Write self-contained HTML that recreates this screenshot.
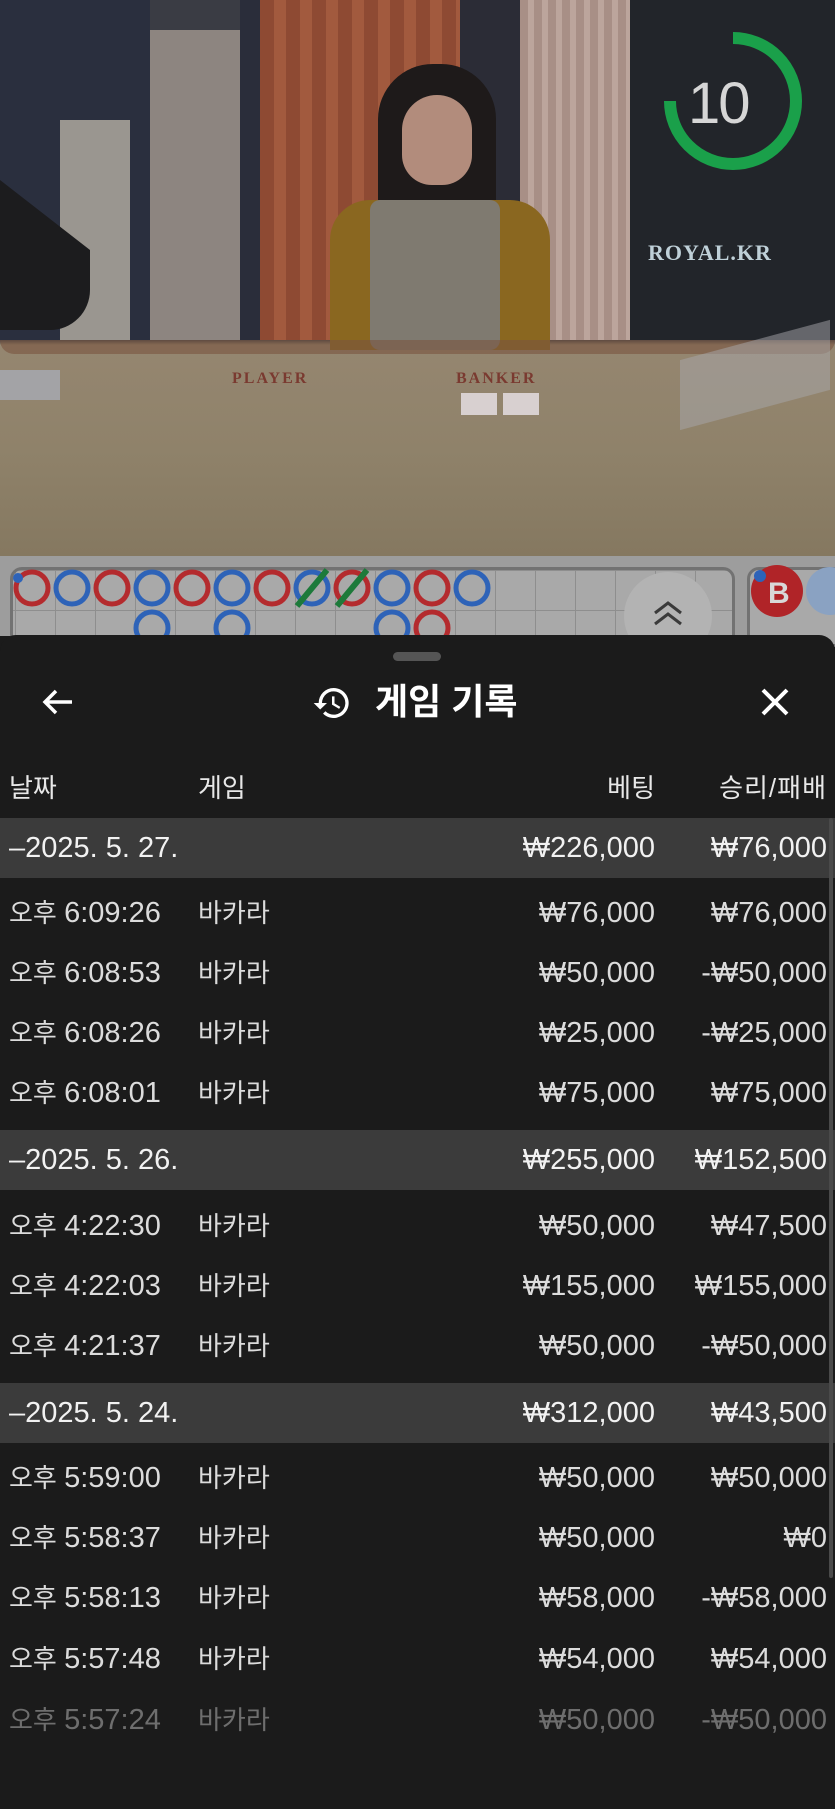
<!DOCTYPE html>
<html><head><meta charset="utf-8"><style>
*{margin:0;padding:0;box-sizing:border-box}
body{width:835px;height:1809px;overflow:hidden;background:#1b1b1b;font-family:"Liberation Sans","Noto Sans CJK KR",sans-serif;position:relative}
.a{position:absolute}
.row{position:absolute;left:0;width:835px;height:60px;font-size:26px;color:#dcdcdc;line-height:60px}
.row span{position:absolute;top:0;white-space:nowrap}
.row i{font-style:normal;font-size:29px}
.n{font-size:29px}
.d{background:#3b3b3b;color:#f2f2f2}
.c1{left:9px}.c2{left:198px}.c3{right:180px}.c4{right:8px}
</style></head><body>
<!-- video -->
<div class="a" style="left:0;top:0;width:835px;height:556px;background:linear-gradient(#3a3c44,#3a3c44 340px,#958670 345px,#8f826a 450px,#857860 556px);overflow:hidden">
 <div class="a" style="left:0;top:0;width:150px;height:340px;background:#2a2f3e"></div>
 <div class="a" style="left:150px;top:30px;width:90px;height:310px;background:#8d8580"></div>
 <div class="a" style="left:60px;top:120px;width:70px;height:220px;background:#9a9690"></div>
 <div class="a" style="left:240px;top:0;width:20px;height:340px;background:#2a2d3a"></div>
 <div class="a" style="left:260px;top:0;width:200px;height:340px;background:repeating-linear-gradient(90deg,#8e4a33 0 14px,#a25a3e 14px 26px)"></div>
 <div class="a" style="left:460px;top:0;width:60px;height:340px;background:#2b2c36"></div>
 <div class="a" style="left:520px;top:0;width:110px;height:340px;background:repeating-linear-gradient(90deg,#a88f86 0 8px,#bca59c 8px 14px)"></div>
 <div class="a" style="left:630px;top:0;width:205px;height:340px;background:#22252a"></div>
 <div class="a" style="left:0;top:0;width:90px;height:330px;background:#1c1c1e;border-radius:0 0 40px 0;clip-path:polygon(0 180px,90px 250px,90px 330px,0 330px)"></div>
 <div class="a" style="left:378px;top:64px;width:118px;height:180px;background:#1e1a1a;border-radius:55px 55px 10px 10px"></div>
 <div class="a" style="left:402px;top:95px;width:70px;height:90px;background:#b28c7c;border-radius:35px 35px 30px 30px"></div>
 <div class="a" style="left:330px;top:200px;width:220px;height:150px;background:#8a6720;border-radius:40px 40px 0 0"></div>
 <div class="a" style="left:370px;top:200px;width:130px;height:150px;background:#7f7a70;border-radius:10px"></div>
 <div class="a" style="left:0;top:340px;width:835px;height:14px;background:#7a5540;border-radius:0 0 30px 30px;opacity:.6"></div>
 <div class="a" style="left:232px;top:370px;font:bold 16px 'Liberation Serif',serif;color:#7a3a30;letter-spacing:2px">PLAYER</div>
 <div class="a" style="left:456px;top:370px;font:bold 16px 'Liberation Serif',serif;color:#7a3a30;letter-spacing:2px">BANKER</div>
 <div class="a" style="left:461px;top:393px;width:36px;height:22px;background:#d8d0d0"></div>
 <div class="a" style="left:503px;top:393px;width:36px;height:22px;background:#d8d0d0"></div>
 <div class="a" style="left:680px;top:340px;width:150px;height:70px;background:#a8a8ac;opacity:.5;transform:skewY(-15deg)"></div>
 <div class="a" style="left:0;top:370px;width:60px;height:30px;background:#a3a3a6"></div>
 <div class="a" style="left:648px;top:240px;font:bold 22px 'Liberation Serif',serif;color:#bfd0d8;letter-spacing:1px">ROYAL.KR</div>
 <svg class="a" style="left:660px;top:28px" width="146" height="146" viewBox="0 0 146 146"><path d="M73 10 A63 63 0 1 1 10 73" fill="none" stroke="#1aa04a" stroke-width="12"/></svg>
 <div class="a" style="left:688px;top:70px;font-size:58px;color:#d6d6d6;letter-spacing:-2px">10</div>
</div>
<!-- roadmap -->
<div class="a" style="left:0;top:556px;width:835px;height:80px;background:#9d9d9d"></div>
<div class="a" style="left:10px;top:567px;width:725px;height:80px;border:3px solid #727272;border-radius:12px;background:#a9a9a9;background-image:linear-gradient(#8e8e8e 1px,transparent 1px),linear-gradient(90deg,#8e8e8e 1px,transparent 1px);background-size:40px 40px;background-position:2px 0"></div>
<div class="a" style="left:747px;top:567px;width:100px;height:80px;border:3px solid #727272;border-radius:12px;background:#a9a9a9"></div>
<svg class="a" style="left:0;top:556px" width="835" height="80">
<g fill="none" stroke-width="5">
<circle cx="32" cy="32" r="16" stroke="#b42b2e"/><circle cx="72" cy="32" r="16" stroke="#2e63b8"/><circle cx="112" cy="32" r="16" stroke="#b42b2e"/><circle cx="152" cy="32" r="16" stroke="#2e63b8"/><circle cx="192" cy="32" r="16" stroke="#b42b2e"/><circle cx="232" cy="32" r="16" stroke="#2e63b8"/><circle cx="272" cy="32" r="16" stroke="#b42b2e"/><circle cx="312" cy="32" r="16" stroke="#2e63b8"/><circle cx="352" cy="32" r="16" stroke="#b42b2e"/><circle cx="392" cy="32" r="16" stroke="#2e63b8"/><circle cx="432" cy="32" r="16" stroke="#b42b2e"/><circle cx="472" cy="32" r="16" stroke="#2e63b8"/>
<circle cx="152" cy="72" r="16" stroke="#2e63b8"/><circle cx="232" cy="72" r="16" stroke="#2e63b8"/><circle cx="392" cy="72" r="16" stroke="#2e63b8"/><circle cx="432" cy="72" r="16" stroke="#b42b2e"/>
<line x1="297" y1="50" x2="327" y2="14" stroke="#1d7a3a" stroke-width="6"/><line x1="337" y1="50" x2="367" y2="14" stroke="#1d7a3a" stroke-width="6"/>
</g>
<circle cx="18" cy="22" r="5" fill="#2e63b8"/>
<circle cx="668" cy="60" r="44" fill="#b3b3b3"/>
<path d="M655 57 L668 47 L681 57 M655 68 L668 58 L681 68" stroke="#3a3a3a" stroke-width="3" fill="none"/>
<circle cx="777" cy="35" r="26" fill="#b02428"/><circle cx="760" cy="20" r="6" fill="#2e63b8"/>
<text x="768" y="47" font-size="30" font-weight="bold" fill="#d8d8d8" font-family="Liberation Sans">B</text>
<circle cx="830" cy="35" r="24" fill="#8aa2c2"/>
</svg>
<!-- sheet -->
<div class="a" style="left:0;top:635px;width:835px;height:1174px;background:#1b1b1b;border-radius:16px 16px 0 0"></div>
<div class="a" style="left:393px;top:652px;width:48px;height:9px;background:#555;border-radius:5px"></div>
<svg class="a" style="left:38px;top:682px" width="40" height="40" viewBox="0 0 40 40"><path d="M34 20H8M18 9L7 20l11 11" stroke="#fff" stroke-width="3.5" fill="none"/></svg>
<svg class="a" style="left:312px;top:683px" width="40" height="40" viewBox="0 0 24 24"><path d="M13 3a9 9 0 0 0-9 9H1l3.9 3.9L9 12H6a7 7 0 1 1 2.05 4.95l-1.42 1.42A9 9 0 1 0 13 3zm-1 5v5l4.28 2.54.72-1.21-3.5-2.08V8H12z" fill="#fff"/></svg>
<div class="a" style="left:375px;top:680px;font-size:36px;font-weight:bold;color:#fff;line-height:44px">게임 기록</div>
<svg class="a" style="left:755px;top:682px" width="40" height="40" viewBox="0 0 40 40"><path d="M8 8L32 32M32 8L8 32" stroke="#fff" stroke-width="4"/></svg>
<div class="row" style="top:758px;color:#e8e8e8;font-size:26px"><span class="c1">날짜</span><span style="left:198px">게임</span><span class="c3">베팅</span><span class="c4" style="letter-spacing:1px">승리/패배</span></div>
<div class="row d n" style="top:818px"><span class="c1">–2025. 5. 27.</span><span class="c3">₩226,000</span><span class="c4">₩76,000</span></div>
<div class="row" style="top:883px"><span class="c1">오후 <i>6:09:26</i></span><span class="c2">바카라</span><span class="c3 n">₩76,000</span><span class="c4 n">₩76,000</span></div>
<div class="row" style="top:943px"><span class="c1">오후 <i>6:08:53</i></span><span class="c2">바카라</span><span class="c3 n">₩50,000</span><span class="c4 n">-₩50,000</span></div>
<div class="row" style="top:1003px"><span class="c1">오후 <i>6:08:26</i></span><span class="c2">바카라</span><span class="c3 n">₩25,000</span><span class="c4 n">-₩25,000</span></div>
<div class="row" style="top:1063px"><span class="c1">오후 <i>6:08:01</i></span><span class="c2">바카라</span><span class="c3 n">₩75,000</span><span class="c4 n">₩75,000</span></div>
<div class="row d n" style="top:1130px"><span class="c1">–2025. 5. 26.</span><span class="c3">₩255,000</span><span class="c4">₩152,500</span></div>
<div class="row" style="top:1196px"><span class="c1">오후 <i>4:22:30</i></span><span class="c2">바카라</span><span class="c3 n">₩50,000</span><span class="c4 n">₩47,500</span></div>
<div class="row" style="top:1256px"><span class="c1">오후 <i>4:22:03</i></span><span class="c2">바카라</span><span class="c3 n">₩155,000</span><span class="c4 n">₩155,000</span></div>
<div class="row" style="top:1316px"><span class="c1">오후 <i>4:21:37</i></span><span class="c2">바카라</span><span class="c3 n">₩50,000</span><span class="c4 n">-₩50,000</span></div>
<div class="row d n" style="top:1383px"><span class="c1">–2025. 5. 24.</span><span class="c3">₩312,000</span><span class="c4">₩43,500</span></div>
<div class="row" style="top:1448px"><span class="c1">오후 <i>5:59:00</i></span><span class="c2">바카라</span><span class="c3 n">₩50,000</span><span class="c4 n">₩50,000</span></div>
<div class="row" style="top:1508px"><span class="c1">오후 <i>5:58:37</i></span><span class="c2">바카라</span><span class="c3 n">₩50,000</span><span class="c4 n">₩0</span></div>
<div class="row" style="top:1568px"><span class="c1">오후 <i>5:58:13</i></span><span class="c2">바카라</span><span class="c3 n">₩58,000</span><span class="c4 n">-₩58,000</span></div>
<div class="row" style="top:1629px"><span class="c1">오후 <i>5:57:48</i></span><span class="c2">바카라</span><span class="c3 n">₩54,000</span><span class="c4 n">₩54,000</span></div>
<div class="row" style="top:1690px;color:#6e6e6e"><span class="c1">오후 <i>5:57:24</i></span><span class="c2">바카라</span><span class="c3 n">₩50,000</span><span class="c4 n">-₩50,000</span></div>
<div class="a" style="left:829px;top:818px;width:4px;height:760px;background:#4a4a4a;border-radius:2px"></div>
</body></html>
